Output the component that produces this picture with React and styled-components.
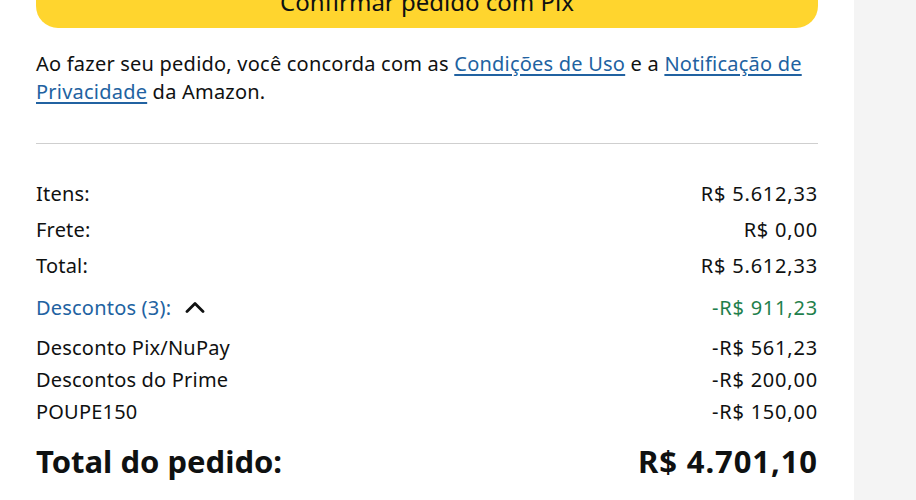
import React from "react";
import styled, { createGlobalStyle } from "styled-components";

const GlobalStyle = createGlobalStyle`
  html, body {
    margin: 0;
    padding: 0;
    background: #ffffff;
  }
  body {
    font-family: "Noto Sans", "Open Sans", Arial, sans-serif;
    color: #0f1111;
    overflow: hidden;
  }
`;

const Page = styled.div`
  display: flex;
  height: 500px;
  overflow: hidden;
`;

const Main = styled.div`
  width: 854px;
  flex: none;
  box-sizing: border-box;
  padding: 0 36px;
  background: #fff;
`;

const Side = styled.div`
  flex: 1;
  background: #f4f4f4;
`;

const ConfirmButton = styled.button`
  display: block;
  width: 100%;
  height: 52px;
  margin-top: -24px;
  border: none;
  border-radius: 22px;
  background: #ffd52e;
  font-family: inherit;
  font-size: 24px;
  color: #0f1111;
  padding: 0;
  line-height: 50px;
  text-align: center;
`;

const Notice = styled.p`
  margin: 22px 0 0;
  font-size: 20px;
  letter-spacing: 0.22px;
  line-height: 28px;
  color: #0f1111;
`;

const Link = styled.a`
  color: #2162a1;
  text-decoration: underline;
  text-underline-offset: 3px;
`;

const Divider = styled.hr`
  margin: 37px 0 0;
  border: none;
  border-top: 1px solid #cfcfcf;
`;

const Summary = styled.div`
  display: flex;
  flex-direction: column;
  margin-top: 31px;
`;

const Row = styled.div`
  display: flex;
  justify-content: space-between;
  align-items: center;
  height: ${(p) => p.$h || 36}px;
  font-size: 20px;
  letter-spacing: 0.2px;
  color: #0f1111;
`;

const Toggle = styled.span`
  display: inline-flex;
  align-items: center;
  gap: 14px;
  color: #2162a1;
`;

const Amount = styled.span`
  letter-spacing: 0.8px;
  color: ${(p) => p.$color || "inherit"};
`;

const GrandTotal = styled.div`
  display: flex;
  justify-content: space-between;
  align-items: center;
  height: 44px;
  margin-top: 12px;
  font-size: 31px;
  font-weight: 700;
  color: #0f1111;
`;

const TotalValue = styled.span`
  letter-spacing: 0.9px;
`;

const Chevron = () => (
  <svg width="20" height="12" viewBox="0 0 20 12" fill="none">
    <path d="M2 10.5 L10 2.5 L18 10.5" stroke="#0f1111" strokeWidth="2.8" strokeLinecap="round" strokeLinejoin="round" />
  </svg>
);

const basics = [
  ["Itens:", "R$ 5.612,33"],
  ["Frete:", "R$ 0,00"],
  ["Total:", "R$ 5.612,33"],
];

const discounts = [
  ["Desconto Pix/NuPay", "-R$ 561,23"],
  ["Descontos do Prime", "-R$ 200,00"],
  ["POUPE150", "-R$ 150,00"],
];

export default function App() {
  return (
    <>
      <GlobalStyle />
      <Page>
        <Main>
          <ConfirmButton>Confirmar pedido com Pix</ConfirmButton>
          <Notice>
            Ao fazer seu pedido, você concorda com as <Link href="#">Condições de Uso</Link> e a{" "}
            <Link href="#">Notificação de Privacidade</Link> da Amazon.
          </Notice>
          <Divider />
          <Summary>
            {basics.map(([label, value]) => (
              <Row key={label}>
                <span>{label}</span>
                <Amount>{value}</Amount>
              </Row>
            ))}
            <Row $h={48}>
              <Toggle>
                Descontos (3):
                <Chevron />
              </Toggle>
              <Amount $color="#1f7f4c">-R$ 911,23</Amount>
            </Row>
            {discounts.map(([label, value]) => (
              <Row key={label} $h={32}>
                <span>{label}</span>
                <Amount>{value}</Amount>
              </Row>
            ))}
            <GrandTotal>
              <span>Total do pedido:</span>
              <TotalValue>R$ 4.701,10</TotalValue>
            </GrandTotal>
          </Summary>
        </Main>
        <Side />
      </Page>
    </>
  );
}
